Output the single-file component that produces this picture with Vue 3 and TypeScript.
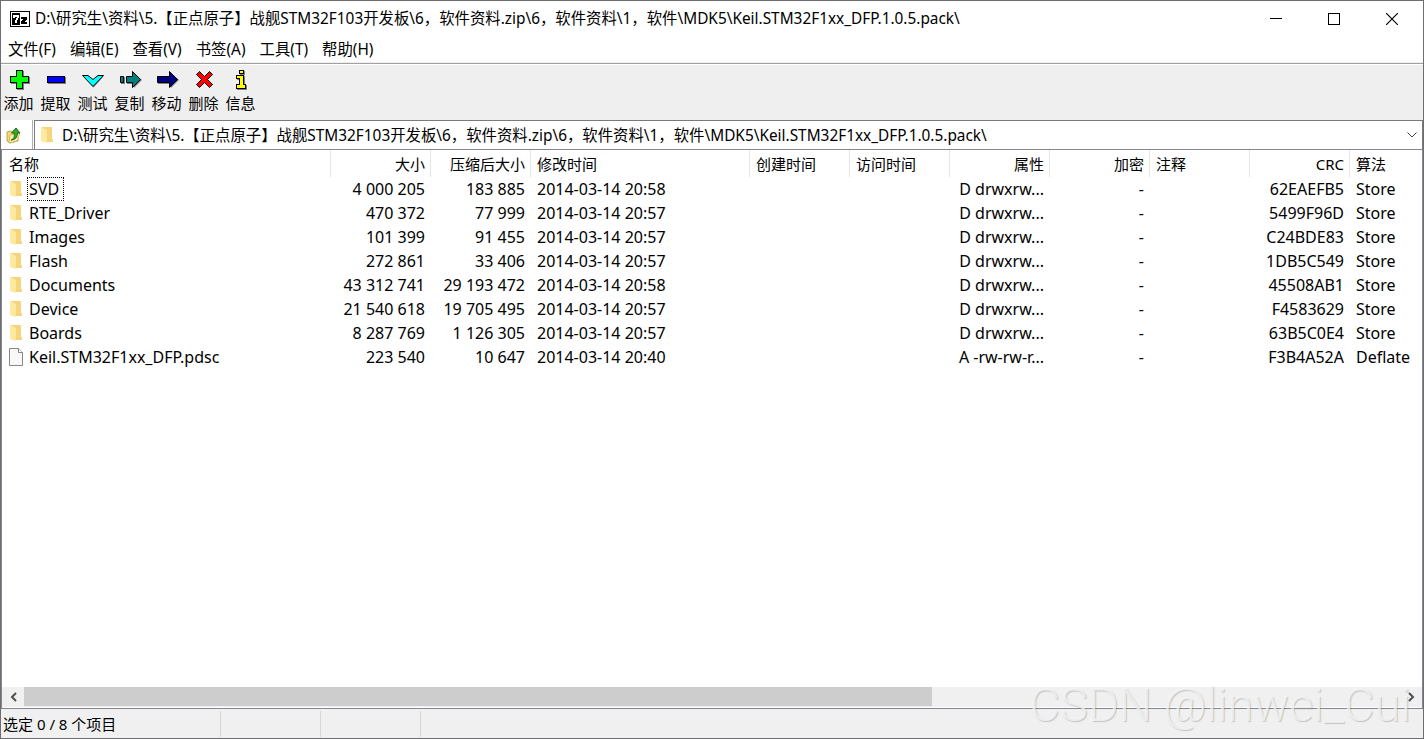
<script setup lang="ts">
import { ref } from 'vue'

interface Entry {
  name: string
  folder: boolean
  size: string
  packed: string
  modified: string
  attributes: string
  crc: string
  method: string
}

interface Column {
  label: string
  key: string
  right: boolean
}

const location = 'D:\\研究生\\资料\\5.【正点原子】战舰STM32F103开发板\\6，软件资料.zip\\6，软件资料\\1，软件\\MDK5\\Keil.STM32F1xx_DFP.1.0.5.pack\\'
const address = ref(location)

const menus = ['文件(F)', '编辑(E)', '查看(V)', '书签(A)', '工具(T)', '帮助(H)']

const tools = [
  { id: 'add', label: '添加' },
  { id: 'extract', label: '提取' },
  { id: 'test', label: '测试' },
  { id: 'copy', label: '复制' },
  { id: 'move', label: '移动' },
  { id: 'delete', label: '删除' },
  { id: 'info', label: '信息' },
]

const columns: Column[] = [
  { label: '名称', key: 'name', right: false },
  { label: '大小', key: 'size', right: true },
  { label: '压缩后大小', key: 'packed', right: true },
  { label: '修改时间', key: 'modified', right: false },
  { label: '创建时间', key: 'created', right: false },
  { label: '访问时间', key: 'accessed', right: false },
  { label: '属性', key: 'attributes', right: true },
  { label: '加密', key: 'encrypted', right: true },
  { label: '注释', key: 'comment', right: false },
  { label: 'CRC', key: 'crc', right: true },
  { label: '算法', key: 'method', right: false },
]

const entries: Entry[] = [
  { name: 'SVD', folder: true, size: '4 000 205', packed: '183 885', modified: '2014-03-14 20:58', attributes: 'D drwxrw...', crc: '62EAEFB5', method: 'Store' },
  { name: 'RTE_Driver', folder: true, size: '470 372', packed: '77 999', modified: '2014-03-14 20:57', attributes: 'D drwxrw...', crc: '5499F96D', method: 'Store' },
  { name: 'Images', folder: true, size: '101 399', packed: '91 455', modified: '2014-03-14 20:57', attributes: 'D drwxrw...', crc: 'C24BDE83', method: 'Store' },
  { name: 'Flash', folder: true, size: '272 861', packed: '33 406', modified: '2014-03-14 20:57', attributes: 'D drwxrw...', crc: '1DB5C549', method: 'Store' },
  { name: 'Documents', folder: true, size: '43 312 741', packed: '29 193 472', modified: '2014-03-14 20:58', attributes: 'D drwxrw...', crc: '45508AB1', method: 'Store' },
  { name: 'Device', folder: true, size: '21 540 618', packed: '19 705 495', modified: '2014-03-14 20:57', attributes: 'D drwxrw...', crc: 'F4583629', method: 'Store' },
  { name: 'Boards', folder: true, size: '8 287 769', packed: '1 126 305', modified: '2014-03-14 20:57', attributes: 'D drwxrw...', crc: '63B5C0E4', method: 'Store' },
  { name: 'Keil.STM32F1xx_DFP.pdsc', folder: false, size: '223 540', packed: '10 647', modified: '2014-03-14 20:40', attributes: 'A -rw-rw-r...', crc: 'F3B4A52A', method: 'Deflate' },
]

const focused = ref('SVD')
</script>

<template>
  <div class="window">
    <header class="titlebar">
      <svg class="app-icon" width="20" height="16" viewBox="0 0 20 16" shape-rendering="crispEdges" aria-hidden="true">
        <rect width="20" height="16" fill="#000" />
        <rect x="1" y="1" width="18" height="14" fill="#fff" />
        <rect x="2" y="2" width="8" height="12" fill="#000" />
        <path d="M3 4h6v3h-1v2h-1v3h-2v-3h1v-2h1v-1h-2v1h-2z" fill="#fff" />
        <path d="M11 6h6v3h-1v1h-1v1h2v2h-6v-3h1v-1h1v-1h-2z" fill="#000" />
      </svg>
      <h1 class="title">{{ location }}</h1>
      <div class="window-controls">
        <button type="button" aria-label="最小化">
          <svg width="12" height="12" viewBox="0 0 12 12" shape-rendering="crispEdges"><path d="M0 5h12v1H0z" /></svg>
        </button>
        <button type="button" aria-label="最大化">
          <svg width="12" height="12" viewBox="0 0 12 12" shape-rendering="crispEdges"><path d="M0 0h12v12H0zM1 1v10h10V1z" fill-rule="evenodd" /></svg>
        </button>
        <button type="button" aria-label="关闭">
          <svg width="12" height="12" viewBox="0 0 12 12"><path d="M0 0L12 12M12 0L0 12" fill="none" stroke="#000" stroke-width="1.2" /></svg>
        </button>
      </div>
    </header>

    <nav class="menubar">
      <button v-for="menu in menus" :key="menu" type="button">{{ menu }}</button>
    </nav>

    <div class="toolbar">
      <button v-for="tool in tools" :key="tool.id" type="button">
        <svg width="37" height="22" viewBox="0 0 37 22" aria-hidden="true">
          <g v-if="tool.id === 'add'" shape-rendering="crispEdges">
            <path d="M16 3h7v6h6v7h-6v6h-7v-6h-6v-7h6z" fill="#808080" />
            <path d="M15 2h7v6h6v7h-6v6h-7v-6h-6v-7h6z" fill="#000" />
            <path d="M16 3h5v6h6v5h-6v6h-5v-6h-6v-5h6z" fill="#0f0" />
          </g>
          <g v-else-if="tool.id === 'extract'" shape-rendering="crispEdges">
            <rect x="10" y="9" width="18" height="7" fill="#808080" />
            <rect x="9" y="8" width="18" height="7" fill="#000" />
            <rect x="10" y="9" width="16" height="5" fill="#00f" />
          </g>
          <g v-else-if="tool.id === 'test'">
            <path d="M8.500 8.500h5l5 4 5-4h5l-10 11z" fill="#808080" />
            <path d="M7.500 7.500h5.500l5 4 5-4h5.500l-10.500 11z" fill="#0ff" stroke="#000" />
          </g>
          <g v-else-if="tool.id === 'copy'">
            <path d="M9 9h4v7H9zM15 9h7V5l8 7-8 8v-4h-7z" fill="#808080" />
            <path d="M8.500 8.500h3v6h-3zM14.500 8.500h6v-5l8 8-8 8v-5h-6z" fill="#008080" stroke="#000" />
          </g>
          <g v-else-if="tool.id === 'move'">
            <path d="M9 9h13V5l8 7-8 8v-4H9z" fill="#808080" />
            <path d="M8.500 8.500h12v-5l8 8-8 8v-5h-12z" fill="#000080" stroke="#000" />
          </g>
          <g v-else-if="tool.id === 'delete'">
            <path d="M10.500 6.500l3-3 5 5 5-5 3 3-5 5 5 5-3 3-5-5-5 5-3-3 5-5z" fill="#f00" stroke="#000" />
          </g>
          <g v-else shape-rendering="crispEdges">
            <path d="M17 3h5v4h-5zM14 8h8v9h2v5H14v-4h3v-6h-3z" fill="#808080" />
            <path d="M16 2h5v4h-5zM13 7h8v9h2v5H13v-5h3v-5h-3z" fill="#000" />
            <path d="M17 3h3v2h-3zM14 8h6v9h2v3h-8v-3h3v-7h-3z" fill="#ff0" />
          </g>
        </svg>
        <span>{{ tool.label }}</span>
      </button>
    </div>

    <div class="addressbar">
      <button type="button" class="up" aria-label="上一级">
        <svg width="16" height="18" viewBox="0 0 16 18">
          <path d="M1 6l4-1 1 2 6-1v9l-8 2-3-2z" fill="#f5d878" stroke="#b8923a" stroke-width=".8" />
          <path d="M4 9l10-2-3 8-8 2z" fill="#fff0ad" stroke="#c9a54b" stroke-width=".7" />
          <path d="M5 14c3-1 4-4 3-7H5.500L10 2l4 5h-2.500c0 4-2 7-6.500 7z" fill="#35a828" stroke="#12650f" stroke-width=".9" />
        </svg>
      </button>
      <div class="combo">
        <svg class="folder" width="14" height="18" viewBox="0 0 14 18" aria-hidden="true">
          <path d="M2 1h10v12h1v3H3z" fill="#f6d67c" />
          <path d="M1 1l6 3v13l-6-2z" fill="#ffe8a0" />
        </svg>
        <input v-model="address" type="text" aria-label="地址" spellcheck="false" />
        <button type="button" aria-label="展开">
          <svg width="10" height="6" viewBox="0 0 10 6"><path d="M.5 .5L5 5 9.500 .5" fill="none" stroke="#404040" /></svg>
        </button>
      </div>
    </div>

    <main class="list">
      <div class="table-area">
        <table>
          <colgroup>
            <col v-for="column in columns" :key="column.key" :class="'col-' + column.key" />
          </colgroup>
          <thead>
            <tr>
              <th v-for="column in columns" :key="column.key" scope="col" :class="{ right: column.right }">
                {{ column.label }}
              </th>
            </tr>
          </thead>
          <tbody>
            <tr v-for="entry in entries" :key="entry.name" @click="focused = entry.name">
              <td class="name">
                <div>
                  <svg v-if="entry.folder" class="folder" width="14" height="18" viewBox="0 0 14 18" aria-hidden="true">
                    <path d="M2 1h10v12h1v3H3z" fill="#f6d67c" />
                    <path d="M1 1l6 3v13l-6-2z" fill="#ffe8a0" />
                  </svg>
                  <svg v-else class="folder" width="14" height="18" viewBox="0 0 14 18" aria-hidden="true">
                    <path d="M.5 .5h9l4 4v13H.5z" fill="#f8f8f8" stroke="#858585" />
                    <path d="M9.500 .5v4h4" fill="#fff" stroke="#858585" />
                  </svg>
                  <span :class="{ focused: focused === entry.name }">{{ entry.name }}</span>
                </div>
              </td>
              <td class="right">{{ entry.size }}</td>
              <td class="right">{{ entry.packed }}</td>
              <td>{{ entry.modified }}</td>
              <td></td>
              <td></td>
              <td class="right">{{ entry.attributes }}</td>
              <td class="right">-</td>
              <td></td>
              <td class="right">{{ entry.crc }}</td>
              <td>{{ entry.method }}</td>
            </tr>
          </tbody>
        </table>
      </div>
      <div class="scrollbar">
        <button type="button" aria-label="向左滚动">
          <svg width="7" height="10" viewBox="0 0 7 10"><path d="M6 1L2 5l4 4" fill="none" stroke="#505050" stroke-width="2" /></svg>
        </button>
        <div class="track"><div class="thumb"></div></div>
        <button type="button" aria-label="向右滚动">
          <svg width="7" height="10" viewBox="0 0 7 10"><path d="M1 1l4 4-4 4" fill="none" stroke="#505050" stroke-width="2" /></svg>
        </button>
      </div>
    </main>

    <footer class="statusbar">
      <span class="selection">选定 0 / 8 个项目</span>
      <span class="pane"></span>
      <span class="pane"></span>
    </footer>

    <div class="watermark">CSDN @linwei_Cui</div>
  </div>
</template>

<style>
body {
  margin: 0;
}
</style>

<style scoped>
.window {
  position: relative;
  box-sizing: border-box;
  display: flex;
  flex-direction: column;
  height: 100vh;
  overflow: hidden;
  border: 1px solid #6e6e72;
  background: #fff;
  color: #000;
  font: 15px/20px "Noto Sans", "Noto Sans CJK SC", sans-serif;
}

button {
  display: flex;
  align-items: center;
  justify-content: center;
  margin: 0;
  padding: 0;
  border: 0;
  background: none;
  color: inherit;
  font: inherit;
}

svg {
  display: block;
  flex: none;
}

.titlebar {
  display: flex;
  align-items: center;
  height: 36px;
  padding: 0 2px 0 9px;
}

.title {
  flex: 1;
  min-width: 0;
  margin: 0 0 0 5px;
  overflow: hidden;
  font: inherit;
  white-space: nowrap;
}

.title,
.menubar button,
.combo input {
  font-size-adjust: cap-height 0.733;
}

.window-controls {
  display: flex;
}

.window-controls button {
  width: 58px;
  height: 36px;
}

.menubar {
  display: flex;
  gap: 14px;
  height: 24px;
  padding: 1px 7px 0;
  border-bottom: 1px solid #efefef;
}

.toolbar {
  display: flex;
  height: 52px;
  padding-top: 4px;
  border-top: 1px solid #a0a0a0;
  box-shadow: inset 0 1px #fff;
  background: #efefef;
}

.toolbar button {
  flex-direction: column;
  justify-content: flex-start;
  gap: 3px;
  width: 37px;
}

.toolbar span {
  padding-right: 2px;
}

.addressbar {
  display: flex;
  height: 29px;
}

.up {
  width: 32px;
  padding-right: 6px;
  border-right: 1px solid #b0b0b0;
}

.combo {
  display: flex;
  flex: 1;
  align-items: center;
  margin-left: 1px;
  padding: 0 0 1px 5px;
  border: 1px solid #7a7a7a;
  border-width: 1px 1px 0;
}

.combo input {
  flex: 1;
  min-width: 0;
  margin: 0 0 0 8px;
  padding: 0;
  border: 0;
  outline: 0;
  background: none;
  color: inherit;
  font-family: inherit;
  font-size: inherit;
}

.combo button {
  width: 20px;
  height: 26px;
}

.list {
  display: flex;
  flex: 1;
  flex-direction: column;
  min-height: 0;
  border: 1px solid #828790;
}

.table-area {
  flex: 1;
  min-height: 0;
  overflow: hidden;
}

table {
  width: 100%;
  table-layout: fixed;
  border-spacing: 0;
}

col {
  width: 100px;
}

.col-name {
  width: 329px;
}

.col-modified {
  width: 219px;
}

.col-method {
  width: auto;
}

th,
td {
  padding: 0 6px;
  text-align: left;
  font-weight: 400;
  white-space: nowrap;
}

th {
  height: 27px;
  border-right: 1px solid #e5e5e5;
  padding-right: 5px;
}

th:first-child,
.name {
  padding-left: 7px;
}

th:last-child {
  border-right: 0;
}

td {
  height: 24px;
  font-size: 16px;
}

.right {
  text-align: right;
}

.name div {
  display: flex;
  align-items: center;
}

.name span {
  margin-left: 4px;
  padding: 1px 4px 1px 1px;
  border: 1px solid transparent;
}

.name .focused {
  border: 1px dotted #000;
}

.scrollbar {
  display: flex;
  height: 20px;
  margin-bottom: 1px;
  background: #f0f0f0;
}

.scrollbar button {
  width: 22px;
}

.track {
  flex: 1;
}

.thumb {
  width: 66%;
  height: 19px;
  background: #cdcdcd;
}

.statusbar {
  display: flex;
  height: 29px;
  padding-bottom: 1px;
  box-sizing: border-box;
  background: #f0f0f0;
}

.statusbar span {
  box-sizing: border-box;
  margin-top: 2px;
  border-right: 1px solid #d7d7d7;
  line-height: 26px;
}

.selection {
  width: 220px;
  padding-left: 2px;
}

.pane {
  width: 100px;
}

.watermark {
  position: absolute;
  right: 12px;
  bottom: 6px;
  color: rgba(246, 246, 246, 0.8);
  font: 300 47px/54px Roboto, sans-serif;
  text-shadow: 1px 1px 1px rgba(0, 0, 0, 0.18);
  pointer-events: none;
}
</style>
